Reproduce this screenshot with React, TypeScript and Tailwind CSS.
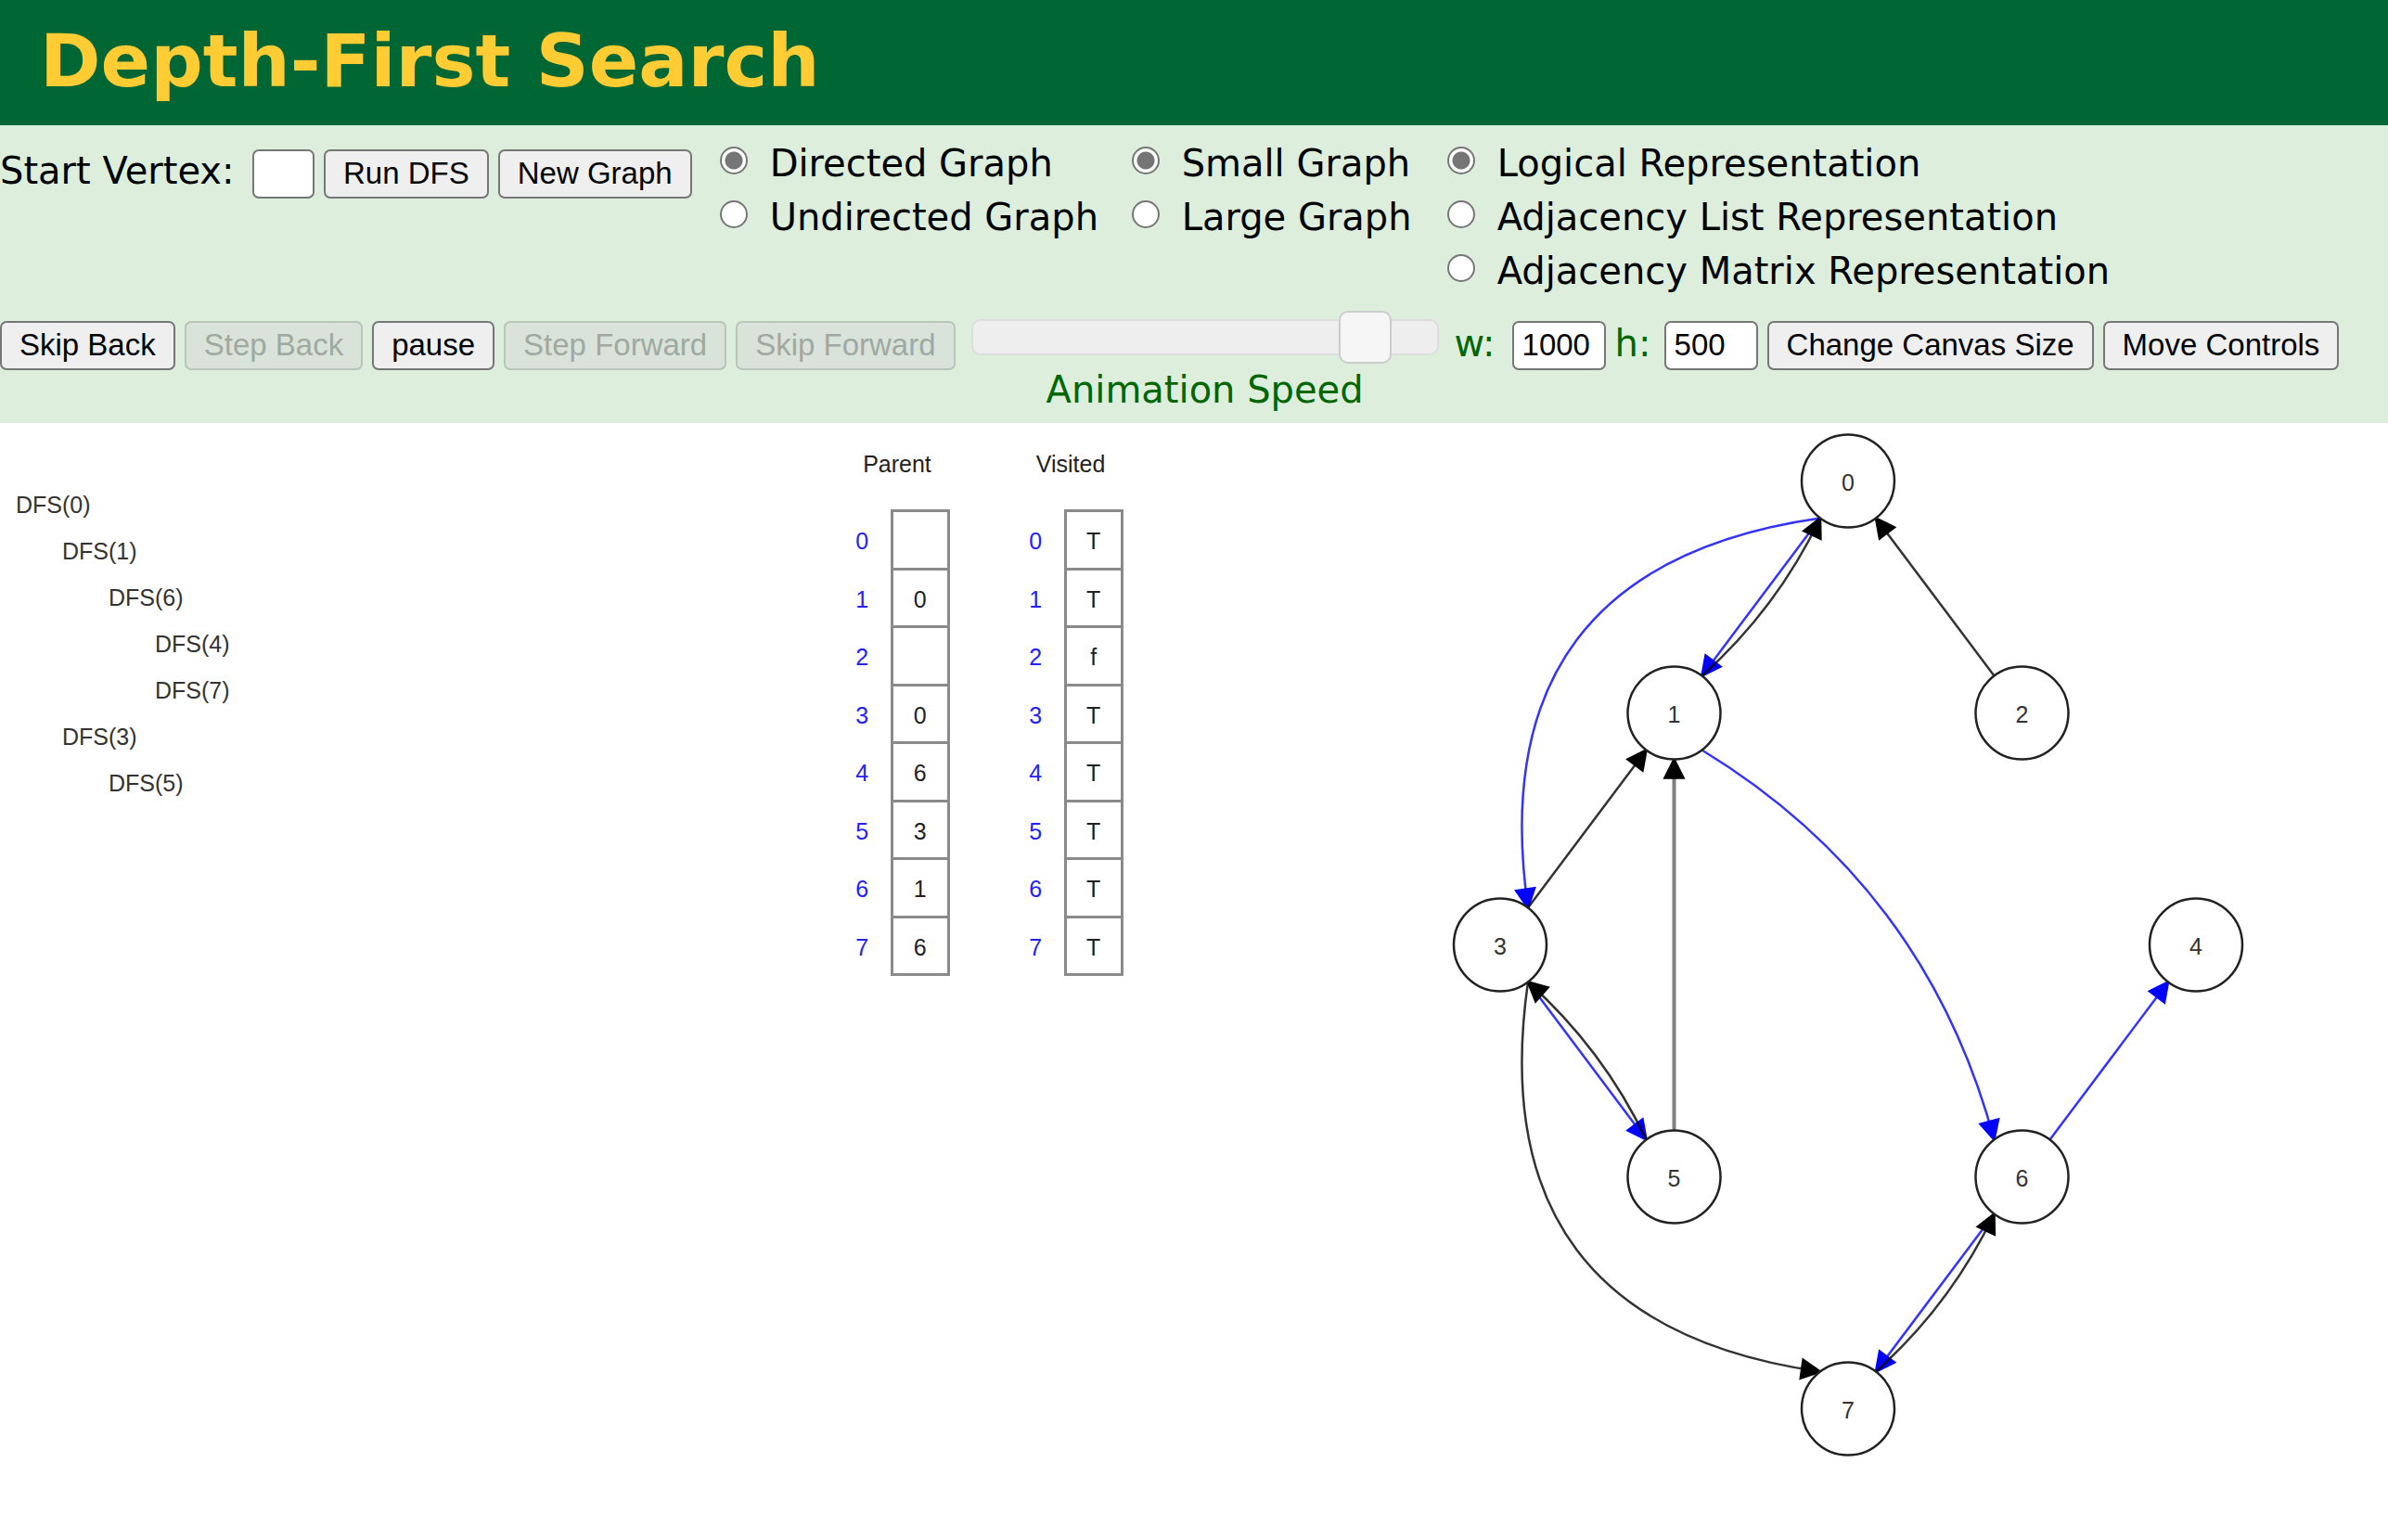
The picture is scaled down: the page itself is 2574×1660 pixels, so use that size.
import React from "react";

const buttonClass =
  "h-[53px] shrink-0 rounded-[7px] border-2 border-[#767676] bg-[#efefef] px-[19px] pb-[2px] font-['Liberation_Sans',Arial,sans-serif] text-[33px] leading-[46px] text-black whitespace-nowrap disabled:border-[#b9c4ba] disabled:bg-[#dae3da] disabled:text-[#a0a9a1]";
const inputClass =
  "h-[53px] shrink-0 rounded-[7px] border-2 border-[#767676] bg-white px-[9px] pb-[2px] font-['Liberation_Sans',Arial,sans-serif] text-[33px] leading-[46px] text-black";

type Choice = { name: string; width: string; options: string[] };

const choices: Choice[] = [
  { name: "direction", width: "w-[414px]", options: ["Directed Graph", "Undirected Graph"] },
  { name: "size", width: "w-[310px]", options: ["Small Graph", "Large Graph"] },
  {
    name: "representation",
    width: "w-auto",
    options: ["Logical Representation", "Adjacency List Representation", "Adjacency Matrix Representation"],
  },
];

const calls = [
  { depth: 0, vertex: 0 },
  { depth: 1, vertex: 1 },
  { depth: 2, vertex: 6 },
  { depth: 3, vertex: 4 },
  { depth: 3, vertex: 7 },
  { depth: 1, vertex: 3 },
  { depth: 2, vertex: 5 },
];

const vertices = [
  [800, 25],
  [725, 125],
  [875, 125],
  [650, 225],
  [950, 225],
  [725, 325],
  [875, 325],
  [800, 425],
];

type Edge = { from: number; to: number; bend: number; tree?: boolean };

const edges: Edge[] = [
  { from: 0, to: 1, bend: 0, tree: true },
  { from: 0, to: 3, bend: 0.5, tree: true },
  { from: 1, to: 6, bend: -0.2, tree: true },
  { from: 3, to: 5, bend: 0, tree: true },
  { from: 6, to: 4, bend: 0, tree: true },
  { from: 6, to: 7, bend: 0, tree: true },
  { from: 1, to: 0, bend: 0.1 },
  { from: 2, to: 0, bend: 0 },
  { from: 3, to: 1, bend: 0 },
  { from: 3, to: 7, bend: 0.5 },
  { from: 5, to: 1, bend: 0 },
  { from: 5, to: 3, bend: 0.1 },
  { from: 7, to: 6, bend: 0.1 },
];

const RADIUS = 20;

function EdgeLine({ from, to, bend, tree }: Edge) {
  const [ax, ay] = vertices[from];
  const [bx, by] = vertices[to];
  const dist = Math.hypot(bx - ax, by - ay);
  const ux = (bx - ax) / dist;
  const uy = (by - ay) / dist;
  const x1 = ax + ux * RADIUS;
  const y1 = ay + uy * RADIUS;
  const x2 = bx - ux * RADIUS;
  const y2 = by - uy * RADIUS;
  const cx = (x1 + x2) / 2 - (y2 - y1) * bend;
  const cy = (y1 + y2) / 2 + (x2 - x1) * bend;
  const tip = Math.hypot(x2 - cx, y2 - cy);
  const dx = (x2 - cx) / tip;
  const dy = (y2 - cy) / tip;
  const hx = x2 - dx * 8;
  const hy = y2 - dy * 8;
  const vertical = x1 === x2;
  return (
    <g className={tree ? "fill-[#0000ff] stroke-[#0000ff]" : "fill-black stroke-black"}>
      <path
        d={`M${x1} ${y1}Q${cx} ${cy} ${x2} ${y2}`}
        fill="none"
        strokeWidth={vertical ? 1.6 : 1}
        strokeOpacity={vertical ? 0.5 : 0.8}
      />
      <path d={`M${x2} ${y2}L${hx - dy * 4} ${hy + dx * 4}L${hx + dy * 4} ${hy - dx * 4}Z`} strokeWidth={1} />
    </g>
  );
}

function Graph() {
  return (
    <svg viewBox="628 0 344 480" className="ml-[351px] h-[1200px] w-[860px] shrink-0" role="img" aria-label="Graph">
      {edges.map((e) => (
        <EdgeLine key={`${e.from}-${e.to}`} {...e} />
      ))}
      {vertices.map(([x, y], i) => (
        <g key={i}>
          <circle cx={x} cy={y} r={RADIUS} className="fill-white stroke-[#222222]" strokeWidth={1} />
          <text
            x={x}
            y={y + 4}
            textAnchor="middle"
            className="fill-[#333333] font-['Liberation_Sans',Arial,sans-serif] text-[10px]"
          >
            {i}
          </text>
        </g>
      ))}
    </svg>
  );
}

function ArrayTable({ title, values }: { title: string; values: string[] }) {
  return (
    <table className="w-[114px] table-fixed border-collapse text-center text-[25px] leading-7">
      <caption className="h-[63px] text-[#222222]">{title}</caption>
      <tbody>
        {values.map((v, i) => (
          <tr key={i} className={i % 2 ? "h-[62px]" : "h-[63px]"}>
            <th scope="row" className="w-[51px] pt-[2px] pr-[11px] font-normal text-[#2222ff]">
              {i}
            </th>
            <td className="border-[3px] border-[#8a8a8a] pt-[2px] text-[#222222]">{v}</td>
          </tr>
        ))}
      </tbody>
    </table>
  );
}

export default function App() {
  return (
    <div className="min-h-screen bg-white font-['DejaVu_Sans',Verdana,sans-serif] text-[40px] leading-[58px] text-black">
      <header className="flex h-[135px] items-center bg-[#006633] px-[43px]">
        <h1 className="pb-1 text-[79px] leading-[96px] font-bold text-[#ffcc33]">Depth-First Search</h1>
      </header>

      <div className="h-[321px] bg-[#ddeedd]">
        <div className="flex h-[198px] items-start">
          <div className="flex items-center gap-[10px] pt-[26px]">
            <label htmlFor="start" className="h-[53px] w-[262px] leading-[46px] whitespace-nowrap">
              Start Vertex:
            </label>
            <input id="start" className={`${inputClass} w-[67px]`} />
            <button className={buttonClass}>Run DFS</button>
            <button className={buttonClass}>New Graph</button>
          </div>
          {choices.map((c) => (
            <fieldset key={c.name} className={`${c.width} ml-[30px] flex shrink-0 flex-col pt-3`}>
              {c.options.map((o, i) => (
                <label key={o} className="flex h-[58px] items-center gap-6 whitespace-nowrap">
                  <input
                    type="radio"
                    name={c.name}
                    defaultChecked={i === 0}
                    className="mb-[6px] size-[30px] shrink-0 appearance-none rounded-full border-2 border-[#767676] bg-white checked:bg-[radial-gradient(circle,#757575_9px,#ffffff_10px)]"
                  />
                  {o}
                </label>
              ))}
            </fieldset>
          ))}
        </div>

        <div className="flex items-start gap-[10px] pt-[13px] text-[#006600]">
          <button className={buttonClass}>Skip Back</button>
          <button className={buttonClass} disabled>
            Step Back
          </button>
          <button className={buttonClass}>pause</button>
          <button className={buttonClass} disabled>
            Step Forward
          </button>
          <button className={buttonClass} disabled>
            Skip Forward
          </button>
          <div className="mx-[7px] flex w-[504px] shrink-0 flex-col items-center">
            <input
              id="speed"
              type="range"
              defaultValue={89}
              className="-mt-3 h-[58px] w-full appearance-none bg-transparent [&::-webkit-slider-runnable-track]:h-[39px] [&::-webkit-slider-runnable-track]:rounded-[10px] [&::-webkit-slider-runnable-track]:border-2 [&::-webkit-slider-runnable-track]:border-[#dddddd] [&::-webkit-slider-runnable-track]:bg-[#eeeeee] [&::-webkit-slider-thumb]:-mt-[11px] [&::-webkit-slider-thumb]:h-[57px] [&::-webkit-slider-thumb]:w-[57px] [&::-webkit-slider-thumb]:appearance-none [&::-webkit-slider-thumb]:rounded-[10px] [&::-webkit-slider-thumb]:border-2 [&::-webkit-slider-thumb]:border-[#cccccc] [&::-webkit-slider-thumb]:bg-[#f6f6f6]"
            />
            <label htmlFor="speed" className="leading-[56px]">
              Animation Speed
            </label>
          </div>
          <label htmlFor="width" className="w-[52px] shrink-0 leading-[48px]">
            w:
          </label>
          <input id="width" defaultValue="1000" className={`${inputClass} w-[101px]`} />
          <label htmlFor="height" className="w-[43px] shrink-0 leading-[48px]">
            h:
          </label>
          <input id="height" defaultValue="500" className={`${inputClass} w-[101px]`} />
          <button className={buttonClass}>Change Canvas Size</button>
          <button className={buttonClass}>Move Controls</button>
        </div>
      </div>

      <main className="flex items-start font-['Liberation_Sans',Arial,sans-serif]">
        <ul className="w-[910px] shrink-0 pt-[63px] pl-[17px] text-[25px] leading-[50px] text-[#333333]">
          {calls.map((c) => (
            <li key={c.vertex} style={{ paddingLeft: c.depth * 50 }}>
              DFS({c.vertex})
            </li>
          ))}
        </ul>
        <div className="flex shrink-0 gap-[73px] pt-[30px]">
          <ArrayTable title="Parent" values={["", "0", "", "0", "6", "3", "1", "6"]} />
          <ArrayTable title="Visited" values={["T", "T", "f", "T", "T", "T", "T", "T"]} />
        </div>
        <Graph />
      </main>
    </div>
  );
}
